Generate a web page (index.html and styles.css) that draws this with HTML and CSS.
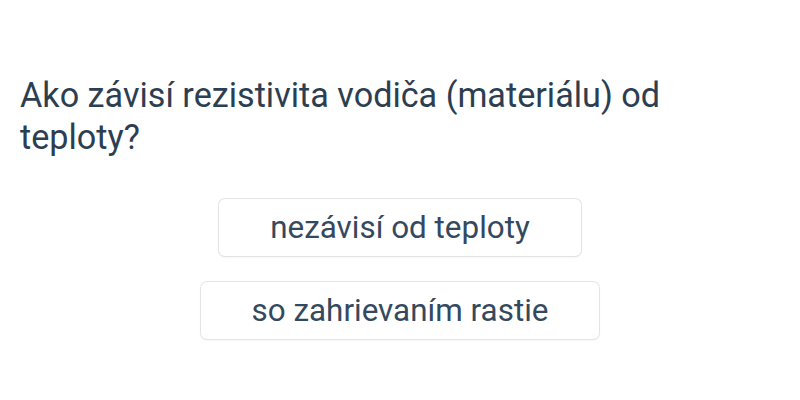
FILE: index.html
```html
<!DOCTYPE html>
<html lang="sk">
<head>
<meta charset="utf-8">
<link rel="stylesheet" href="styles.css">
</head>
<body>
<main class="quiz">
  <h1 class="question">Ako závisí rezistivita vodiča (materiálu) od teploty?</h1>
  <div class="options">
    <button class="option">nezávisí od teploty</button>
    <button class="option">so zahrievaním rastie</button>
  </div>
</main>
</body>
</html>
```
FILE: styles.css
```css
html, body {
  margin: 0;
  padding: 0;
  background: #ffffff;
}
body {
  font-family: Roboto, "Noto Sans", sans-serif;
  color: #2c3e50;
  width: 800px;
  height: 400px;
  overflow: hidden;
}
.quiz {
  padding: 74px 20px 0 20px;
}
.question {
  margin: 0;
  font-size: 34.2px;
  font-weight: 400;
  line-height: 42px;
  color: #2c3e50;
}
.options {
  margin-top: 41px;
  display: flex;
  flex-direction: column;
  align-items: center;
  gap: 26px;
}
.option {
  font-family: Roboto, "Noto Sans", sans-serif;
  font-size: 31.4px;
  color: #34495e;
  background: #ffffff;
  border: none;
  border-radius: 6px;
  box-shadow: 0 0 0 1px #e4e4e4, 0 1px 3px rgba(0,0,0,0.08);
  padding: 0 51px;
  height: 57px;
}
```
